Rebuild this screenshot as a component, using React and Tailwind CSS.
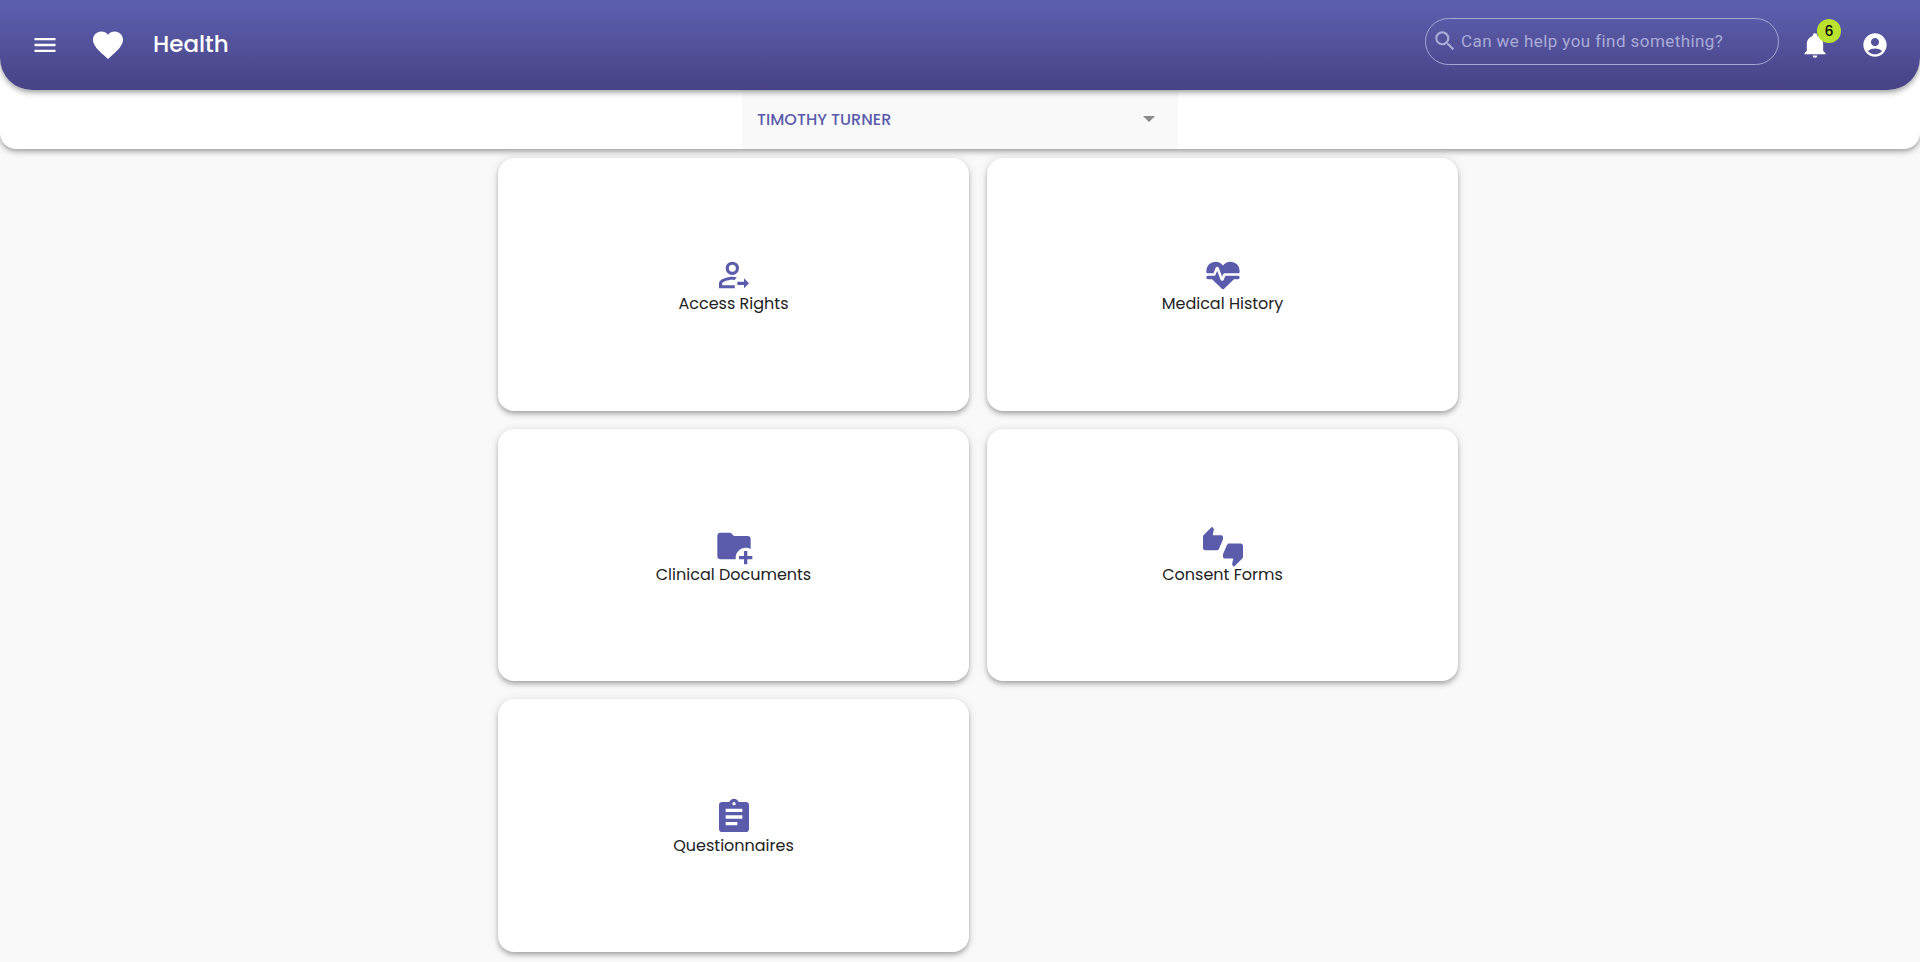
import React, { useState } from 'react';
import { MdAccountCircle, MdFavorite, MdMenu, MdSearch } from 'react-icons/md';

const ICONS = {
    bell: 'M21,19V20H3V19L5,17V11C5,7.9 7.03,5.17 10,4.29C10,4.19 10,4.1 10,4A2,2 0 0,1 12,2A2,2 0 0,1 14,4C14,4.1 14,4.19 14,4.29C16.97,5.17 19,7.9 19,11V17L21,19M14,21A2,2 0 0,1 12,23A2,2 0 0,1 10,21',
    access: 'M11,4A4,4 0 0,0 7,8A4,4 0 0,0 11,12A4,4 0 0,0 15,8A4,4 0 0,0 11,4M11,5.9A2.1,2.1 0 0,1 13.1,8A2.1,2.1 0 0,1 11,10.1A2.1,2.1 0 0,1 8.9,8A2.1,2.1 0 0,1 11,5.9M11,13C8.33,13 3,14.34 3,17V20H12.5V18.1H4.9V17C4.9,16.36 8.03,14.9 11,14.9C11.5,14.9 12,14.94 12.5,15.02C12.8,14.4 13.2,13.8 13.7,13.3C12.7,13.1 11.8,13 11,13M18,20V18H14V16H18V14L21,17L18,20Z',
    heartPulse: 'M7.5,4A5.5,5.5 0 0,0 2,9.5C2,10 2.09,10.5 2.22,11H6.3L7.57,7.63C7.87,6.83 9.05,6.75 9.43,7.63L11.5,13L12.09,11.58C12.22,11.25 12.57,11 13,11H21.78C21.91,10.5 22,10 22,9.5A5.5,5.5 0 0,0 16.5,4C14.64,4 13,4.93 12,6.34C11,4.93 9.36,4 7.5,4V4M3,12.5A1,1 0 0,0 2,13.5A1,1 0 0,0 3,14.5H5.44L11,20C12,20.9 12,20.9 13,20L18.56,14.5H21A1,1 0 0,0 22,13.5A1,1 0 0,0 21,12.5H13.4L12.47,14.8C12.07,15.81 10.92,15.67 10.55,14.83L8.5,9.5L7.54,11.83C7.39,12.21 7.05,12.5 6.6,12.5H3Z',
    folderPlus: 'M13,19C13,19.34 13.04,19.67 13.09,20H4A2,2 0 0,1 2,18V6A2,2 0 0,1 4,4H10L12,6H20A2,2 0 0,1 22,8V13.81C21.12,13.3 20.1,13 19,13C15.69,13 13,15.69 13,19M20,18V15H18V18H15V20H18V23H20V20H23V18H20Z',
    thumbs: 'M22.5,10.5H15.75C15.13,10.5 14.6,10.88 14.37,11.41L12.11,16.7C12.04,16.87 12,17.06 12,17.25V18.5A1,1 0 0,0 13,19.5H18.18L17.5,22.68V22.92C17.5,23.23 17.63,23.5 17.83,23.72L18.62,24.5L23.56,19.56C23.83,19.29 24,18.91 24,18.5V12A1.5,1.5 0 0,0 22.5,10.5M12,6.5A1,1 0 0,0 11,5.5H5.82L6.5,2.32V2.09C6.5,1.78 6.37,1.5 6.17,1.29L5.38,0.5L0.44,5.44C0.17,5.71 0,6.09 0,6.5V13A1.5,1.5 0 0,0 1.5,14.5H8.25C8.87,14.5 9.4,14.11 9.63,13.59L11.89,8.3C11.96,8.13 12,7.94 12,7.75V6.5Z',
    clipboard: 'M17,9H7V7H17M17,13H7V11H17M14,17H7V15H14M12,3A1,1 0 0,1 13,4A1,1 0 0,1 12,5A1,1 0 0,1 11,4A1,1 0 0,1 12,3M19,3H14.82C14.4,1.84 13.3,1 12,1C10.7,1 9.6,1.84 9.18,3H5A2,2 0 0,0 3,5V19A2,2 0 0,0 5,21H19A2,2 0 0,0 21,19V5A2,2 0 0,0 19,3Z'
};

const TILES = [
    { label: 'Access Rights', icon: ICONS.access },
    { label: 'Medical History', icon: ICONS.heartPulse },
    { label: 'Clinical Documents', icon: ICONS.folderPlus },
    { label: 'Consent Forms', icon: ICONS.thumbs },
    { label: 'Questionnaires', icon: ICONS.clipboard }
];

function Icon({ path, className }) {
    return (
        <svg viewBox="0 0 24 24" fill="currentColor" overflow="visible" className={className} aria-hidden="true">
            <path d={path} />
        </svg>
    );
}

function Header() {
    const [query, setQuery] = useState('');

    return (
        <header className="relative z-20 flex h-[90px] items-center rounded-b-[32px] bg-linear-to-b from-[#5b5eac] from-10% to-[#474285] px-[31px] text-white shadow-[0_2px_4px_-1px_rgba(0,0,0,0.2),0_4px_5px_0_rgba(0,0,0,0.14),0_1px_10px_0_rgba(0,0,0,0.12)]">
            <button type="button" aria-label="Menu" className="mr-[31px]">
                <MdMenu className="size-7" />
            </button>
            <MdFavorite className="mr-[27px] size-9" />
            <h1 className="pb-0.5 text-[23px] leading-8 font-medium">Health</h1>

            <label className="mb-2 ml-auto flex h-[47px] w-[354px] items-center gap-[3px] rounded-full border border-[#a5a7d3] px-1.5 text-[#a9abd8]">
                <MdSearch className="size-[26px] shrink-0" />
                <input
                    type="text"
                    aria-label="Search"
                    value={query}
                    onChange={e => setQuery(e.target.value)}
                    placeholder="Can we help you find something?"
                    className="min-w-0 flex-1 font-['Roboto',sans-serif] text-[17px] leading-6 tracking-wide outline-none placeholder:text-[#a9abd8]"
                />
            </label>

            <button type="button" aria-label="Notifications" className="relative ml-[22px]">
                <Icon path={ICONS.bell} className="size-7" />
                <span className="absolute -top-3 left-4 flex size-6 items-center justify-center rounded-full bg-[#b9e12d] text-sm font-medium text-black">
                    6
                </span>
            </button>
            <button type="button" aria-label="Account" className="ml-8">
                <MdAccountCircle className="size-7" />
            </button>
        </header>
    );
}

function PatientBar() {
    return (
        <div className="relative z-10 -mt-8 flex justify-center rounded-b-2xl bg-white pt-8 shadow-[0_2px_4px_-1px_rgba(0,0,0,0.2),0_4px_5px_0_rgba(0,0,0,0.14),0_1px_10px_0_rgba(0,0,0,0.12)]">
            <div className="relative w-full max-w-[436px]">
                <select
                    aria-label="Patient"
                    className="block h-[59px] w-full appearance-none bg-[#f9f9f9] px-[15px] text-base font-medium text-[#5a5cab] outline-none"
                >
                    <option>TIMOTHY TURNER</option>
                </select>
                <svg viewBox="0 0 12 6" className="pointer-events-none absolute top-[26px] right-[23px] h-1.5 w-3 fill-[#8a8a8a]" aria-hidden="true">
                    <path d="M0 0h12L6 6z" />
                </svg>
            </div>
        </div>
    );
}

function Tile({ label, icon }) {
    return (
        <button
            type="button"
            className="flex min-h-40 flex-col items-center justify-center rounded-2xl bg-white shadow-[0_2px_4px_-1px_rgba(0,0,0,0.2),0_4px_5px_0_rgba(0,0,0,0.14),0_1px_10px_0_rgba(0,0,0,0.12)]"
        >
            <Icon path={icon} className="size-10 text-[#5a5cab]" />
            <span className="text-base leading-[18px] text-[#222222]">{label}</span>
        </button>
    );
}

function App() {
    return (
        <div className="flex min-h-screen flex-col bg-[#f9f9f9] font-['Poppins','Inter',sans-serif]">
            <Header />
            <PatientBar />
            <main className="mx-auto flex w-full max-w-[996px] flex-1 pt-[9px] pb-[10px] pl-9">
                <div className="grid flex-1 grid-cols-2 grid-rows-3 gap-[18px]">
                    {TILES.map(tile => (
                        <Tile key={tile.label} label={tile.label} icon={tile.icon} />
                    ))}
                </div>
            </main>
        </div>
    );
}

export default App;
